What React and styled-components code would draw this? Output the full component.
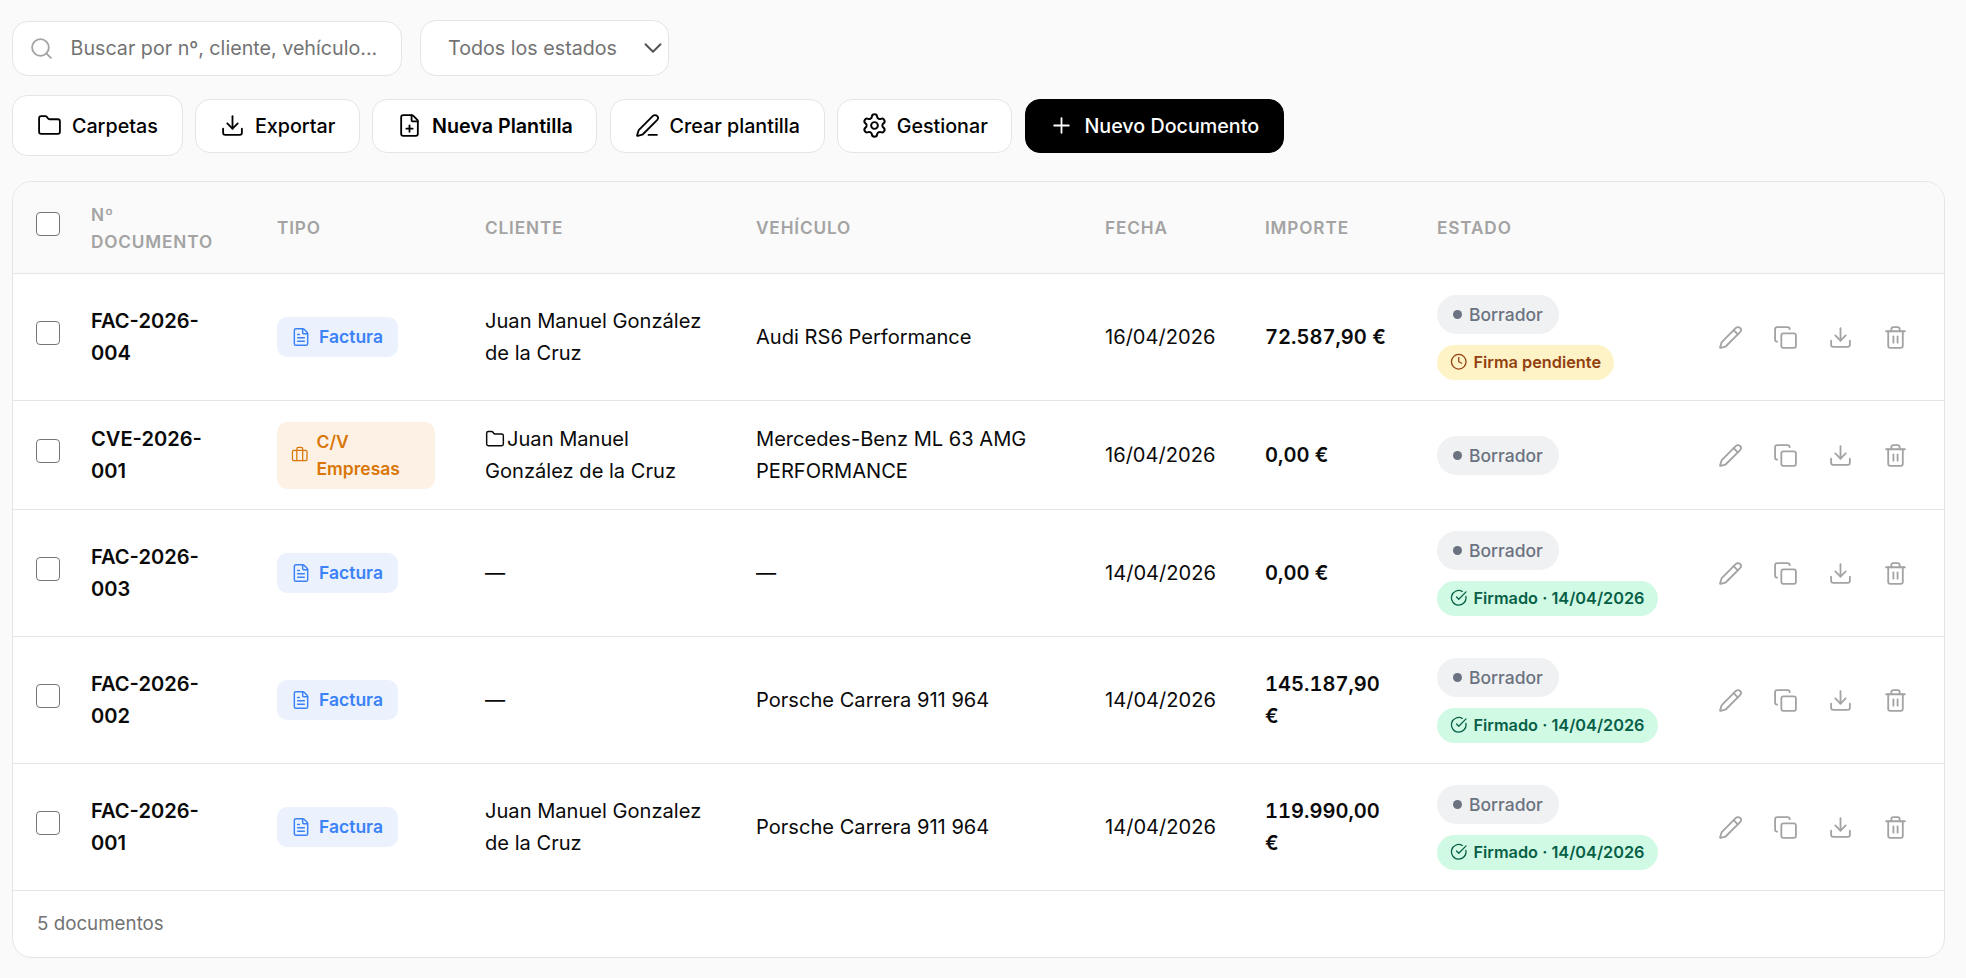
import React from 'react';
import styled, { createGlobalStyle } from 'styled-components';
import {
  Search,
  ChevronDown,
  Folder,
  Download,
  FilePlus,
  PenLine,
  Settings,
  Plus,
  FileText,
  Briefcase,
  Pencil,
  Copy,
  Trash2,
  Clock,
  CircleCheckBig,
} from 'lucide-react';

const GlobalStyle = createGlobalStyle`
  * { box-sizing: border-box; }
  html, body { margin: 0; padding: 0; background: #fafafa; }
  body { font-family: 'Inter', 'Liberation Sans', sans-serif; color: #0a0a0a; }
`;

const documents = [
  {
    id: 'FAC-2026-004',
    type: 'factura',
    client: 'Juan Manuel González de la Cruz',
    vehicle: 'Audi RS6 Performance',
    date: '16/04/2026',
    amount: '72.587,90 €',
    sign: { kind: 'pending', label: 'Firma pendiente' },
  },
  {
    id: 'CVE-2026-001',
    type: 'cv',
    client: 'Juan Manuel González de la Cruz',
    folder: true,
    vehicle: 'Mercedes-Benz ML 63 AMG PERFORMANCE',
    date: '16/04/2026',
    amount: '0,00 €',
  },
  {
    id: 'FAC-2026-003',
    type: 'factura',
    client: '—',
    vehicle: '—',
    date: '14/04/2026',
    amount: '0,00 €',
    sign: { kind: 'signed', label: 'Firmado · 14/04/2026' },
  },
  {
    id: 'FAC-2026-002',
    type: 'factura',
    client: '—',
    vehicle: 'Porsche Carrera 911 964',
    date: '14/04/2026',
    amount: '145.187,90 €',
    sign: { kind: 'signed', label: 'Firmado · 14/04/2026' },
  },
  {
    id: 'FAC-2026-001',
    type: 'factura',
    client: 'Juan Manuel Gonzalez de la Cruz',
    vehicle: 'Porsche Carrera 911 964',
    date: '14/04/2026',
    amount: '119.990,00 €',
    sign: { kind: 'signed', label: 'Firmado · 14/04/2026' },
  },
];

const columnWidths = [53, 186, 208, 271, 349, 160, 172, 272, 260];

const App = () => {
  return (
    <Page>
      <GlobalStyle />
      <FilterBar>
        <SearchBox>
          <Search size={25} strokeWidth={1.75} color='#a3a3a3' />
          <span>Buscar por nº, cliente, vehículo...</span>
        </SearchBox>
        <SelectBox>
          <span>Todos los estados</span>
          <ChevronDown size={30} strokeWidth={1.5} color='#525252' />
        </SelectBox>
      </FilterBar>

      <Toolbar>
        <ActionButton $tall>
          <Folder size={25} strokeWidth={1.75} />
          Carpetas
        </ActionButton>
        <ActionButton>
          <Download size={25} strokeWidth={1.75} />
          Exportar
        </ActionButton>
        <ActionButton $strong>
          <FilePlus size={25} strokeWidth={1.75} />
          Nueva Plantilla
        </ActionButton>
        <ActionButton>
          <PenLine size={25} strokeWidth={1.75} />
          Crear plantilla
        </ActionButton>
        <ActionButton>
          <GearIcon size={27} strokeWidth={1.75} />
          Gestionar
        </ActionButton>
        <ActionButton $primary>
          <Plus size={25} strokeWidth={1.75} />
          Nuevo Documento
        </ActionButton>
      </Toolbar>

      <Card>
        <Table>
          <colgroup>
            {columnWidths.map((width, index) => (
              <col key={index} style={{ width }} />
            ))}
          </colgroup>
          <thead>
            <tr>
              <HeadCell $check>
                <CheckBox type='checkbox' />
              </HeadCell>
              <HeadCell>Nº Documento</HeadCell>
              <HeadCell>Tipo</HeadCell>
              <HeadCell>Cliente</HeadCell>
              <HeadCell>Vehículo</HeadCell>
              <HeadCell>Fecha</HeadCell>
              <HeadCell>Importe</HeadCell>
              <HeadCell>Estado</HeadCell>
              <HeadCell />
            </tr>
          </thead>
          <tbody>
            {documents.map((doc) => (
              <tr key={doc.id}>
                <Cell $check>
                  <CheckBox type='checkbox' />
                </Cell>
                <Cell $strong>{doc.id}</Cell>
                <Cell>
                  {doc.type === 'factura' ? (
                    <TypeBadge $kind='factura'>
                      <FileText size={20} strokeWidth={1.75} />
                      Factura
                    </TypeBadge>
                  ) : (
                    <TypeBadge $kind='cv'>
                      <Briefcase size={17.5} strokeWidth={1.75} />
                      <span>C/V Empresas</span>
                    </TypeBadge>
                  )}
                </Cell>
                <Cell>
                  {doc.folder && <InlineFolder size={20} strokeWidth={1.75} />}
                  {doc.client}
                </Cell>
                <Cell>{doc.vehicle}</Cell>
                <Cell>{doc.date}</Cell>
                <AmountCell $strong>{doc.amount}</AmountCell>
                <Cell>
                  <StatusStack>
                    <DraftPill>
                      <Dot />
                      Borrador
                    </DraftPill>
                    {doc.sign && (
                      <SignPill $kind={doc.sign.kind}>
                        {doc.sign.kind === 'pending' ? (
                          <Clock size={17.5} strokeWidth={1.75} />
                        ) : (
                          <CircleCheckBig size={17.5} strokeWidth={1.75} />
                        )}
                        {doc.sign.label}
                      </SignPill>
                    )}
                  </StatusStack>
                </Cell>
                <Cell>
                  <RowActions>
                    <IconButton type='button'>
                      <Pencil size={25} strokeWidth={1.75} />
                    </IconButton>
                    <IconButton type='button'>
                      <Copy size={25} strokeWidth={1.75} />
                    </IconButton>
                    <IconButton type='button'>
                      <Download size={25} strokeWidth={1.75} />
                    </IconButton>
                    <IconButton type='button'>
                      <Trash2 size={25} strokeWidth={1.75} />
                    </IconButton>
                  </RowActions>
                </Cell>
              </tr>
            ))}
          </tbody>
        </Table>
        <Footer>5 documentos</Footer>
      </Card>
    </Page>
  );
};

const Page = styled.div`
  padding: 20px 21px 20px 12px;
  min-height: 978px;
  background: #fafafa;
`;

const FilterBar = styled.div`
  display: flex;
  align-items: center;
  gap: 18px;
  margin-bottom: 19px;
`;

const SearchBox = styled.div`
  display: flex;
  align-items: center;
  gap: 17px;
  width: 390px;
  height: 55px;
  padding: 0 15.5px;
  background: #fff;
  border: 1px solid #e5e5e5;
  border-radius: 16px;
  font-size: 19.7px;
  color: #737373;
`;

const SelectBox = styled.div`
  display: flex;
  align-items: center;
  justify-content: space-between;
  width: 249px;
  height: 56px;
  padding: 0 0 0 27px;
  background: #fff;
  border: 1px solid #e5e5e5;
  border-radius: 16px;
  font-size: 19.7px;
  color: #737373;
`;

const Toolbar = styled.div`
  display: flex;
  align-items: center;
  gap: 12.5px;
  margin-bottom: 25px;
`;

const ActionButton = styled.div`
  display: flex;
  align-items: center;
  gap: 10px;
  height: ${(p) => (p.$tall ? '61px' : '54px')};
  padding: 0 ${(p) => (p.$tall ? '24px' : '23.6px')};
  background: ${(p) => (p.$primary ? '#000' : '#fff')};
  color: ${(p) => (p.$primary ? '#fff' : '#000')};
  border: 1px solid ${(p) => (p.$primary ? '#000' : '#e5e5e5')};
  border-radius: 15px;
  font-size: 19.7px;
  font-weight: ${(p) => (p.$strong ? 600 : 500)};
  white-space: nowrap;
`;

const GearIcon = styled(Settings)`
  margin: 0 -1px;
`;

const Card = styled.div`
  width: 1933px;
  background: #fff;
  border: 1px solid #e5e5e5;
  border-radius: 20px;
  overflow: hidden;
`;

const Table = styled.table`
  width: 100%;
  table-layout: fixed;
  border-collapse: collapse;
`;

const HeadCell = styled.th`
  height: 91px;
  padding: ${(p) => (p.$check ? '1px 0 0 23px' : '1px 25px 0')};
  background: #fafafa;
  border-bottom: 1px solid #e5e5e5;
  text-align: left;
  vertical-align: middle;
  font-size: 17.2px;
  font-weight: 600;
  line-height: 27px;
  letter-spacing: 0.05em;
  text-transform: uppercase;
  color: #a3a3a3;
`;

const Cell = styled.td`
  padding: ${(p) => (p.$check ? '21px 0 20px 23px' : '21px 25px 20px')};
  border-bottom: 1px solid #e5e5e5;
  vertical-align: middle;
  font-size: 20.1px;
  line-height: 32px;
  font-weight: ${(p) => (p.$strong ? 600 : 400)};
  color: #0a0a0a;
`;

const AmountCell = styled(Cell)`
  font-variant-numeric: tabular-nums;
`;

const CheckBox = styled.input`
  display: inline-block;
  appearance: none;
  width: 24px;
  height: 24px;
  margin: 0;
  background: #fff;
  border: 1.5px solid #767676;
  border-radius: 4px;
`;

const TypeBadge = styled.div`
  display: inline-flex;
  align-items: center;
  gap: 8px;
  padding: 6px 15px 7px 14px;
  border-radius: 10px;
  font-size: 17.5px;
  font-weight: 600;
  line-height: 27px;
  background: ${(p) => (p.$kind === 'cv' ? '#fdf1e6' : '#ebf2fe')};
  color: ${(p) => (p.$kind === 'cv' ? '#d97706' : '#3b82f6')};

  svg {
    flex-shrink: 0;
  }
`;

const InlineFolder = styled(Folder)`
  margin-right: 2px;
  vertical-align: -3px;
`;

const StatusStack = styled.div`
  display: flex;
  flex-direction: column;
  align-items: flex-start;
  gap: 11px;
`;

const DraftPill = styled.div`
  display: inline-flex;
  align-items: center;
  gap: 7px;
  height: 39px;
  padding: 1px 16px 0;
  border-radius: 999px;
  background: #f0f1f3;
  color: #6b7280;
  font-size: 17.5px;
  font-weight: 500;
`;

const Dot = styled.span`
  width: 9px;
  height: 9px;
  border-radius: 50%;
  background: #6b7280;
`;

const SignPill = styled.div`
  display: inline-flex;
  align-items: center;
  gap: 6px;
  height: 35px;
  padding: 0 13px;
  border-radius: 999px;
  font-size: 16.3px;
  font-weight: 600;
  white-space: nowrap;
  background: ${(p) => (p.$kind === 'pending' ? '#fef3c7' : '#d1fae5')};
  color: ${(p) => (p.$kind === 'pending' ? '#92400e' : '#065f46')};
`;

const RowActions = styled.div`
  display: flex;
  justify-content: flex-end;
  gap: 13px;
  padding-right: 2.5px;
`;

const IconButton = styled.button`
  display: flex;
  align-items: center;
  justify-content: center;
  width: 42.5px;
  height: 42.5px;
  padding: 0;
  background: transparent;
  border: none;
  color: #a3a3a3;
`;

const Footer = styled.div`
  padding: 20px 24px;
  font-size: 18.75px;
  line-height: 26px;
  color: #737373;
`;

export default App;
